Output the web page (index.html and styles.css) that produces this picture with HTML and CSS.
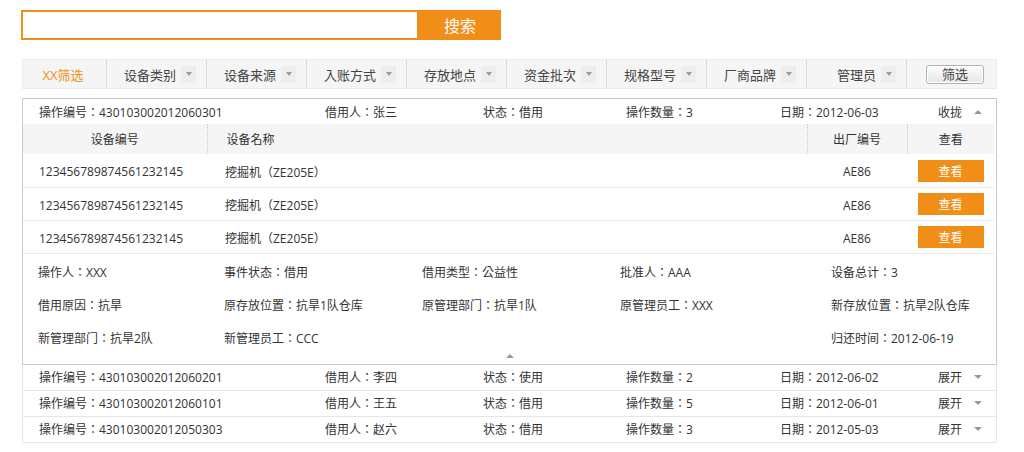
FILE: index.html
```html
<!DOCTYPE html>
<html lang="zh-CN">
<head>
<meta charset="utf-8">
<title>设备操作记录</title>
<link rel="stylesheet" href="styles.css">
</head>
<body>
<div class="page">
  <form class="search">
    <input class="search-input" type="text">
    <button class="search-btn" type="button">搜索</button>
  </form>

  <div class="filters">
    <div class="filter filter-title">XX筛选</div>
    <div class="filter"><span>设备类别</span><i class="dd"></i></div>
    <div class="filter"><span>设备来源</span><i class="dd"></i></div>
    <div class="filter"><span>入账方式</span><i class="dd"></i></div>
    <div class="filter"><span>存放地点</span><i class="dd"></i></div>
    <div class="filter"><span>资金批次</span><i class="dd"></i></div>
    <div class="filter"><span>规格型号</span><i class="dd"></i></div>
    <div class="filter"><span>厂商品牌</span><i class="dd"></i></div>
    <div class="filter"><span>管理员</span><i class="dd"></i></div>
    <div class="filter filter-action"><button class="filter-btn" type="button">筛选</button></div>
  </div>

  <div class="records">
    <div class="record open">
      <div class="rec-head">
        <span>操作编号：430103002012060301</span>
        <span>借用人：张三</span>
        <span>状态：借用</span>
        <span>操作数量：3</span>
        <span>日期：2012-06-03</span>
        <span class="toggle">收拢<i class="arrow up"></i></span>
      </div>
      <table class="items">
        <colgroup>
          <col class="c-no"><col class="c-name"><col class="c-serial"><col class="c-view">
        </colgroup>
        <thead>
          <tr><th>设备编号</th><th class="th-left">设备名称</th><th>出厂编号</th><th>查看</th></tr>
        </thead>
        <tbody>
          <tr><td class="td-no">123456789874561232145</td><td class="td-name">挖掘机（ZE205E）</td><td class="td-center">AE86</td><td class="td-center"><button class="view-btn" type="button">查看</button></td></tr>
          <tr><td class="td-no">123456789874561232145</td><td class="td-name">挖掘机（ZE205E）</td><td class="td-center">AE86</td><td class="td-center"><button class="view-btn" type="button">查看</button></td></tr>
          <tr><td class="td-no">123456789874561232145</td><td class="td-name">挖掘机（ZE205E）</td><td class="td-center">AE86</td><td class="td-center"><button class="view-btn" type="button">查看</button></td></tr>
        </tbody>
      </table>
      <div class="details">
        <span>操作人：XXX</span>
        <span>事件状态：借用</span>
        <span>借用类型：公益性</span>
        <span>批准人：AAA</span>
        <span>设备总计：3</span>
        <span>借用原因：抗旱</span>
        <span>原存放位置：抗旱1队仓库</span>
        <span>原管理部门：抗旱1队</span>
        <span>原管理员工：XXX</span>
        <span>新存放位置：抗旱2队仓库</span>
        <span>新管理部门：抗旱2队</span>
        <span>新管理员工：CCC</span>
        <span class="col-last">归还时间：2012-06-19</span>
      </div>
      <div class="fold"><i class="arrow up"></i></div>
    </div>

    <div class="record">
      <div class="rec-head">
        <span>操作编号：430103002012060201</span>
        <span>借用人：李四</span>
        <span>状态：使用</span>
        <span>操作数量：2</span>
        <span>日期：2012-06-02</span>
        <span class="toggle">展开<i class="arrow down"></i></span>
      </div>
    </div>
    <div class="record">
      <div class="rec-head">
        <span>操作编号：430103002012060101</span>
        <span>借用人：王五</span>
        <span>状态：借用</span>
        <span>操作数量：5</span>
        <span>日期：2012-06-01</span>
        <span class="toggle">展开<i class="arrow down"></i></span>
      </div>
    </div>
    <div class="record">
      <div class="rec-head">
        <span>操作编号：430103002012050303</span>
        <span>借用人：赵六</span>
        <span>状态：借用</span>
        <span>操作数量：3</span>
        <span>日期：2012-05-03</span>
        <span class="toggle">展开<i class="arrow down"></i></span>
      </div>
    </div>
  </div>
</div>
</body>
</html>
```
FILE: styles.css
```css
* { box-sizing: border-box; }

body {
  margin: 0;
  background: #fff;
  font-family: "Open Sans", "Noto Sans CJK TC", sans-serif;
  font-feature-settings: "locl" 0;
  font-size: 12px;
  color: #333;
}

.page {
  width: 1024px;
  padding: 10px 0 0 22px;
}

/* search */
.search {
  display: flex;
  width: 480px;
  height: 30px;
  margin: 0 0 0 -1px;
}
.search-input {
  width: 398px;
  height: 30px;
  border: 2px solid #f18e17;
  outline: none;
  padding: 0 8px;
  font: inherit;
}
.search-btn {
  flex: 1;
  border: 0;
  padding: 0;
  background: #f18e17;
  color: #fff;
  font-family: inherit;
  font-size: 16px;
}

/* filter bar */
.filters {
  display: grid;
  grid-template-columns: 84px repeat(8, 100px) 1fr;
  width: 975px;
  height: 30px;
  margin-top: 19px;
  background: #f5f5f5;
  border: 1px solid #ececec;
}
.filter {
  display: flex;
  align-items: center;
  justify-content: flex-end;
  gap: 5px;
  padding-right: 10px;
  font-size: 13px;
  color: #444;
  border-right: 1px dotted #c8c8c8;
}
.filter-title {
  justify-content: center;
  padding-right: 3px;
  color: #f18e17;
}
.filter-action {
  border-right: 0;
  padding-right: 12px;
}
.dd {
  display: flex;
  align-items: center;
  justify-content: center;
  width: 15px;
  height: 17px;
  background: #ededed;
}
.dd::after {
  content: "";
  border-left: 3.5px solid transparent;
  border-right: 3.5px solid transparent;
  border-top: 4px solid #9a9a9a;
}
.filter-btn {
  width: 58px;
  height: 19px;
  padding: 0;
  border: 1px solid #b3b3b3;
  border-radius: 3px;
  background: linear-gradient(#fdfdfd, #e6e6e6);
  box-shadow: inset 0 0 0 1px #fff;
  font-family: inherit;
  font-feature-settings: inherit;
  font-size: 13px;
  line-height: 16px;
  color: #444;
}

/* records */
.records {
  width: 975px;
  margin-top: 9px;
}
.record {
  border: 1px solid #e6e6e6;
  border-top: 0;
}
.record.open {
  border: 1px solid #c9c9c9;
}
.rec-head {
  display: grid;
  grid-template-columns: 286px 158px 143px 154px 158px 1fr;
  align-items: center;
  height: 25px;
  padding-left: 16px;
}
.toggle {
  display: flex;
  align-items: center;
  justify-content: flex-end;
  gap: 12px;
  padding-right: 14px;
}
.arrow {
  width: 0;
  height: 0;
  border-left: 4px solid transparent;
  border-right: 4px solid transparent;
}
.arrow.up { border-bottom: 4px solid #999; }
.arrow.down { border-top: 4px solid #999; }

/* equipment table */
.items {
  width: calc(100% - 2px);
  border-collapse: collapse;
  table-layout: fixed;
}
.c-no { width: 184px; }
.c-name { width: 600px; }
.c-serial { width: 100px; }
.items th {
  height: 30px;
  padding: 0;
  background: #f5f5f5;
  font-weight: normal;
  color: #333;
  text-align: center;
}
.items th + th { border-left: 1px dotted #c8c8c8; }
.items th.th-left { text-align: left; padding-left: 19px; }
.items td {
  height: 33px;
  padding: 3px 0 0;
  border-bottom: 1px solid #e8e8e8;
  vertical-align: middle;
}
.td-no { padding-left: 16px !important; }
.td-name { padding-left: 18px !important; }
.td-center { text-align: center; }
.view-btn {
  display: block;
  width: 66px;
  height: 22px;
  margin: -2px auto 0;
  padding: 0;
  border: 0;
  background: #f18e17;
  color: #fff;
  font-family: inherit;
  font-feature-settings: inherit;
  font-size: 12px;
}

/* details */
.details {
  display: grid;
  grid-template-columns: 186px 198px 198px 211px 1fr;
  grid-auto-rows: 20px;
  row-gap: 13px;
  align-items: center;
  padding: 8px 0 0 15px;
}
.col-last { grid-column: 5; }
.fold {
  display: flex;
  align-items: center;
  justify-content: center;
  height: 16px;
}
```
